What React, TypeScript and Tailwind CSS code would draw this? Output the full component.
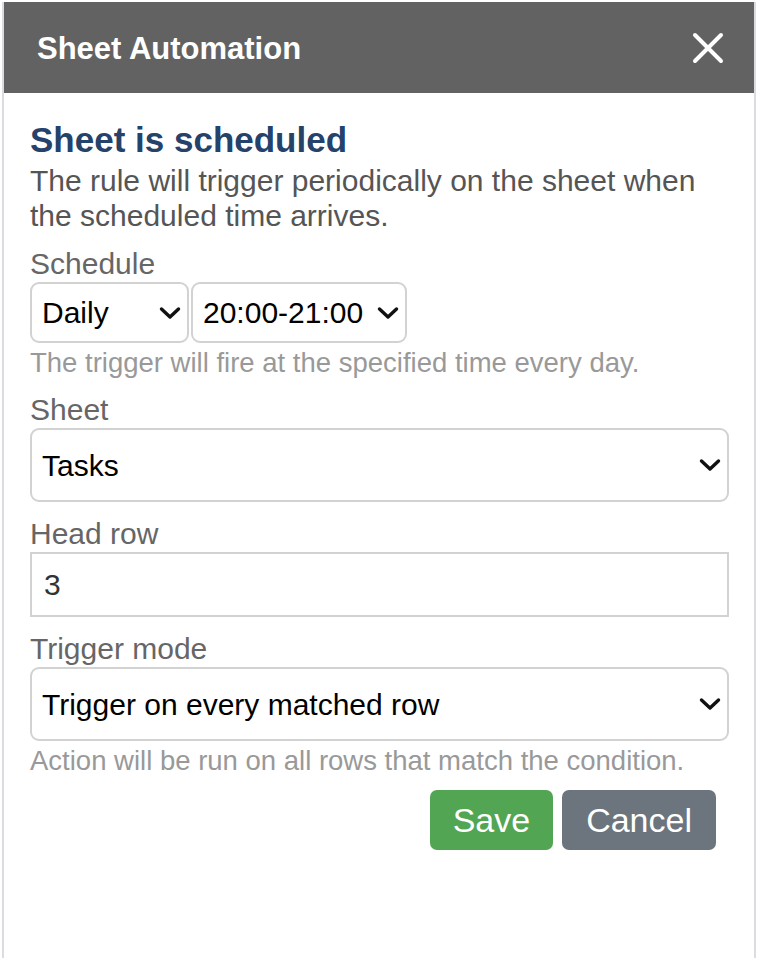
import { useState } from "react"

const font = { fontFamily: '"Liberation Sans", Arial, Helvetica, sans-serif' }

function Chevron() {
    return (
        <svg width="22" height="13" viewBox="0 0 22 13" fill="none" className="pointer-events-none">
            <path d="M2.5 2.5 L11 10.5 L19.5 2.5" stroke="#111" strokeWidth="3.4" strokeLinecap="round" strokeLinejoin="round" />
        </svg>
    )
}

interface SelectBoxProps {
    value: string
    options: string[]
    onChange: (v: string) => void
    className: string
}

function SelectBox({ value, options, onChange, className }: SelectBoxProps) {
    return (
        <div className={`relative ${className}`}>
            <select
                value={value}
                onChange={(e) => onChange(e.target.value)}
                className="appearance-none w-full h-full bg-white border-2 border-[#d2d2d2] rounded-[9px] pl-[10px] pr-[34px] text-[30px] text-black outline-none"
                style={font}
            >
                {options.map((o) => (
                    <option key={o} value={o}>{o}</option>
                ))}
            </select>
            <span className="absolute right-[8px] top-1/2 -translate-y-1/2 flex">
                <Chevron />
            </span>
        </div>
    )
}

export default function App() {
    const [freq, setFreq] = useState("Daily")
    const [time, setTime] = useState("20:00-21:00")
    const [sheet, setSheet] = useState("Tasks")
    const [headRow, setHeadRow] = useState("3")
    const [mode, setMode] = useState("Trigger on every matched row")

    return (
        <div className="w-[758px] h-[958px] bg-white pl-[2px] pt-[2px]" style={font}>
            <div className="w-[754px] h-full border-x-2 border-[#dcdce0] flex flex-col">
                <div className="h-[91px] bg-[#626262] flex items-center justify-between pl-[33px] pr-[30px]">
                    <h1 className="text-[31px] font-bold text-white leading-none mt-[2px]">Sheet Automation</h1>
                    <button className="w-[32px] h-[32px] flex items-center justify-center">
                        <svg width="32" height="32" viewBox="0 0 32 32">
                            <path d="M3 3 L29 29 M29 3 L3 29" stroke="white" strokeWidth="4" strokeLinecap="round" />
                        </svg>
                    </button>
                </div>

                <div className="pt-[27px] pl-[26px] pr-[25px]">
                    <h2 className="text-[35px] leading-[40px] font-bold text-[#24426a]">Sheet is scheduled</h2>
                    <p className="mt-[3px] text-[30px] leading-[35px] text-[#555]">
                        The rule will trigger periodically on the sheet when the scheduled time arrives.
                    </p>

                    <div className="mt-[13px]">
                        <label className="block text-[30px] leading-[36px] text-[#666]">Schedule</label>
                        <div className="flex gap-[2px]">
                            <SelectBox value={freq} onChange={setFreq} options={["Daily", "Weekly", "Monthly"]} className="w-[159px] h-[61px]" />
                            <SelectBox value={time} onChange={setTime} options={["19:00-20:00", "20:00-21:00", "21:00-22:00"]} className="w-[216px] h-[61px]" />
                        </div>
                        <p className="mt-[4px] text-[27.5px] leading-[32px] text-[#999]">The trigger will fire at the specified time every day.</p>
                    </div>

                    <div className="mt-[13px]">
                        <label className="block text-[30px] leading-[36px] text-[#666]">Sheet</label>
                        <SelectBox value={sheet} onChange={setSheet} options={["Tasks", "Projects"]} className="w-full h-[74px]" />
                    </div>

                    <div className="mt-[14px]">
                        <label className="block text-[30px] leading-[36px] text-[#666]">Head row</label>
                        <input
                            value={headRow}
                            onChange={(e) => setHeadRow(e.target.value)}
                            className="w-full h-[65px] border-2 border-[#d2d2d2] pl-[12px] text-[30px] text-[#333] outline-none"
                            style={font}
                        />
                    </div>

                    <div className="mt-[14px]">
                        <label className="block text-[30px] leading-[36px] text-[#666]">Trigger mode</label>
                        <SelectBox value={mode} onChange={setMode} options={["Trigger on every matched row", "Trigger once"]} className="w-full h-[74px]" />
                        <p className="mt-[4px] text-[27.5px] leading-[32px] text-[#999]">Action will be run on all rows that match the condition.</p>
                    </div>

                    <div className="mt-[13px] flex justify-end gap-[9px] pr-[13px]">
                        <button className="h-[60px] px-[23px] rounded-[7px] bg-[#52a552] text-white text-[34px]" style={font}>Save</button>
                        <button className="h-[60px] px-[24px] rounded-[7px] bg-[#6c757d] text-white text-[34px]" style={font}>Cancel</button>
                    </div>
                </div>
            </div>
        </div>
    )
}
